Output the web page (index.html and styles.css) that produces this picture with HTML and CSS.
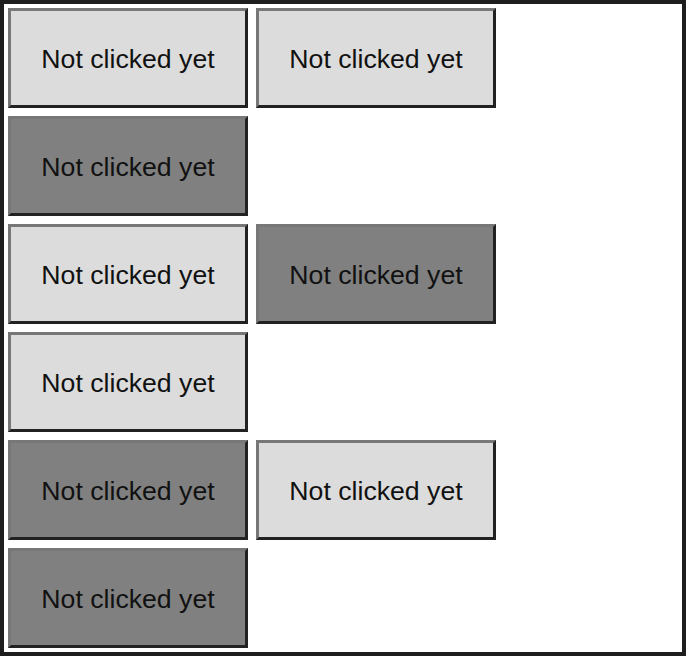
FILE: index.html
```html
<!DOCTYPE html>
<html lang="en">
<head>
    <meta charset="UTF-8">
    <title>Buttons</title>
    <link rel="stylesheet" href="styles.css">
</head>
<body>
    <div class="board">
        <div class="row">
            <button class="btn">Not clicked yet</button>
            <button class="btn">Not clicked yet</button>
        </div>
        <div class="row">
            <button class="btn dark">Not clicked yet</button>
        </div>
        <div class="row">
            <button class="btn">Not clicked yet</button>
            <button class="btn dark">Not clicked yet</button>
        </div>
        <div class="row">
            <button class="btn">Not clicked yet</button>
        </div>
        <div class="row">
            <button class="btn dark">Not clicked yet</button>
            <button class="btn">Not clicked yet</button>
        </div>
        <div class="row">
            <button class="btn dark">Not clicked yet</button>
        </div>
    </div>
</body>
</html>
```

FILE: styles.css
```css
* {
    margin: 0;
    padding: 0;
    box-sizing: border-box;
}

body {
    font-family: "Liberation Sans", Arial, sans-serif;
    background: white;
}

.board {
    width: 686px;
    height: 656px;
    border: 4px solid #1e1e1e;
    background: white;
}

.row {
    display: flex;
}

.btn {
    width: 240px;
    height: 100px;
    margin: 4px;
    padding-top: 2px;
    border: 3px solid;
    border-color: #777 #222 #222 #777;
    background: #dcdcdc;
    color: #111;
    font-family: inherit;
    font-size: 26.67px;
    cursor: pointer;
}

.btn.dark {
    background: #808080;
}
```
